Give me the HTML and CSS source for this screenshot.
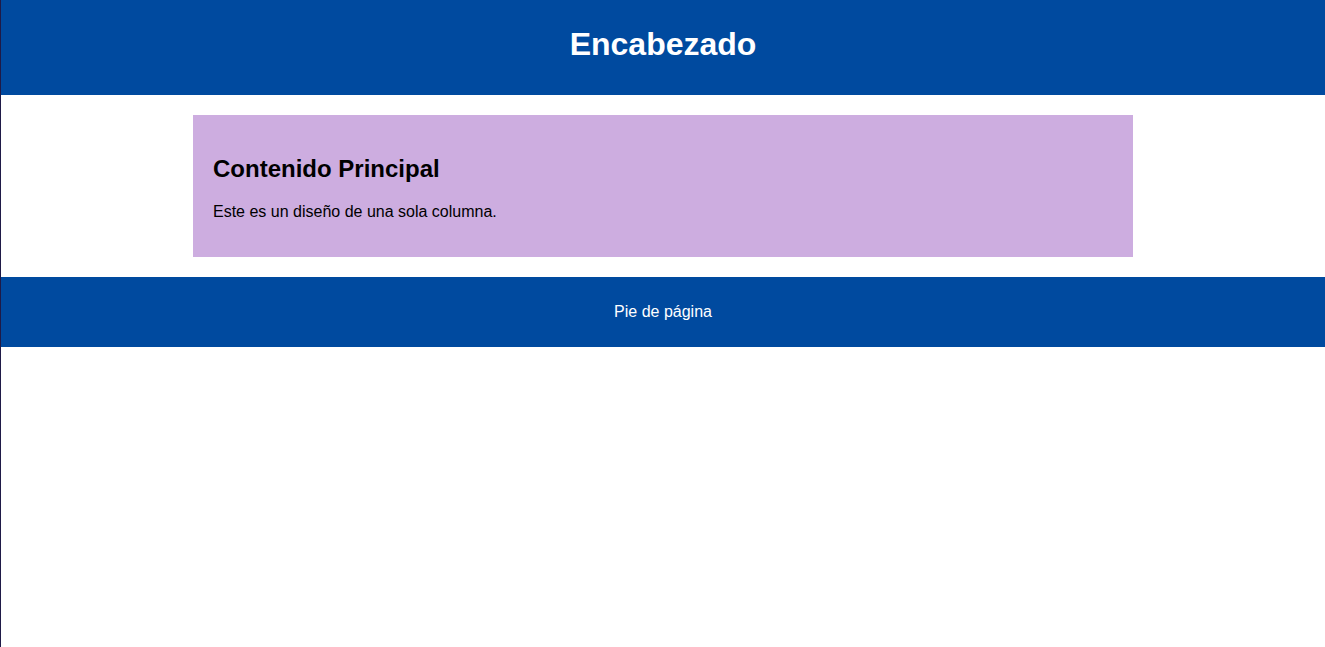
FILE: index.html
```html
<!DOCTYPE html>
<html lang="es">
<head>
<meta charset="utf-8">
<title>Diseño de una sola columna</title>
<link rel="stylesheet" href="styles.css">
</head>
<body>
<header class="site-header">
  <h1 class="site-title">Encabezado</h1>
</header>
<main class="main-content">
  <h2 class="main-title">Contenido Principal</h2>
  <p class="main-text">Este es un diseño de una sola columna.</p>
</main>
<footer class="site-footer">
  <p class="footer-text">Pie de página</p>
</footer>
</body>
</html>
```
FILE: styles.css
```css
html, body {
  margin: 0;
  padding: 0;
}
body {
  font-family: "Liberation Sans", Arial, sans-serif;
  color: #000;
  background: #fff;
  min-height: 100vh;
  box-sizing: border-box;
  border-left: 1px solid #1f1a47;
}
.site-header {
  background: #004a9f;
  color: #fff;
  text-align: center;
  padding: 5px 0 11px;
}
.site-title {
  margin: 21px 0;
  font-size: 32px;
  line-height: 37px;
  font-weight: bold;
}
.main-content {
  width: 940px;
  box-sizing: border-box;
  margin: 20px auto;
  padding: 20px;
  background: #cdade0;
}
.main-title {
  margin: 20px 0;
  font-size: 24px;
  line-height: 27.6px;
  font-weight: bold;
}
.main-text {
  margin: 0 0 16px;
  font-size: 16px;
  line-height: 18.4px;
}
.site-footer {
  background: #004a9f;
  color: #fff;
  text-align: center;
  padding: 10px 0;
}
.footer-text {
  margin: 16px 0;
  font-size: 16px;
  line-height: 18px;
}
```
